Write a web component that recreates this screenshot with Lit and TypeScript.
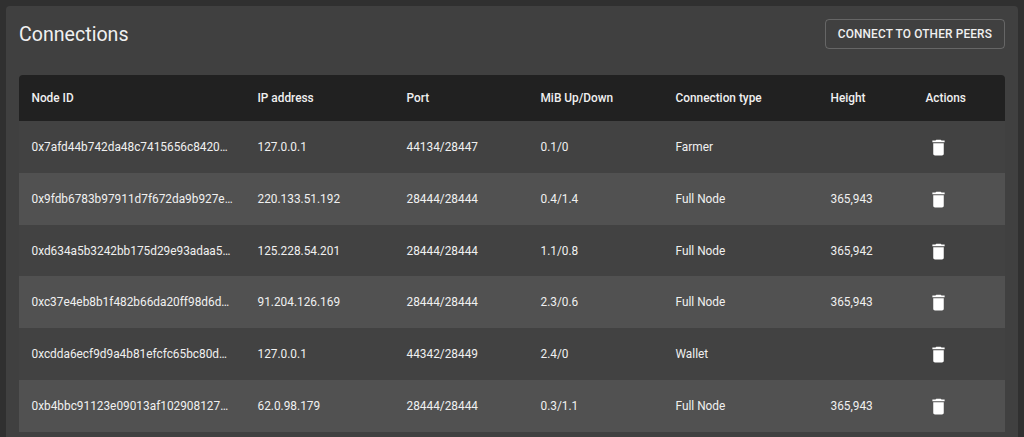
import { LitElement, html, css } from "lit";
import { customElement } from "lit/decorators.js";

const rows = [
  ["0x7afd44b742da48c7415656c8420…", "127.0.0.1", "44134/28447", "0.1/0", "Farmer", ""],
  ["0x9fdb6783b97911d7f672da9b927e…", "220.133.51.192", "28444/28444", "0.4/1.4", "Full Node", "365,943"],
  ["0xd634a5b3242bb175d29e93adaa5…", "125.228.54.201", "28444/28444", "1.1/0.8", "Full Node", "365,942"],
  ["0xc37e4eb8b1f482b66da20ff98d6d…", "91.204.126.169", "28444/28444", "2.3/0.6", "Full Node", "365,943"],
  ["0xcdda6ecf9d9a4b81efcfc65bc80d…", "127.0.0.1", "44342/28449", "2.4/0", "Wallet", ""],
  ["0xb4bbc91123e09013af102908127…", "62.0.98.179", "28444/28444", "0.3/1.1", "Full Node", "365,943"],
];

const heads = ["Node ID", "IP address", "Port", "MiB Up/Down", "Connection type", "Height", "Actions"];
const widths = [226, 149, 134, 135, 155, 95, 92];

@customElement("app-root")
export class AppRoot extends LitElement {
  static styles = css`
    :host {
      display: block;
      height: 437px;
      overflow: hidden;
      background: #303030;
      font-family: Roboto, "Liberation Sans", sans-serif;
      color: #f0f0f0;
    }
    .card {
      margin: 6px 6px 0;
      padding: 13px 13px 0;
      height: 500px;
      border-radius: 4px;
      background: #404040;
    }
    .top {
      display: flex;
      justify-content: space-between;
      align-items: center;
      height: 30px;
      margin-bottom: 26px;
    }
    h1 {
      margin: 2px 0 0;
      font-size: 19.6px;
      font-weight: 400;
      line-height: 28px;
    }
    .btn {
      font: 500 11.85px/16px Roboto, sans-serif;
      letter-spacing: 0.15px;
      color: #f0f0f0;
      background: transparent;
      border: 1px solid rgba(255, 255, 255, 0.2);
      border-radius: 4px;
      padding: 6px 12px;
      height: 30px;
      white-space: nowrap;
    }
    table {
      width: 986px;
      table-layout: fixed;
      border-collapse: separate;
      border-spacing: 0;
      font-size: 11.85px;
    }
    th {
      background: #212121;
      font-weight: 500;
      text-align: left;
      height: 46px;
      padding: 0 12.5px;
      box-sizing: border-box;
    }
    th:first-child { border-top-left-radius: 4px; }
    th:last-child { border-top-right-radius: 4px; }
    td {
      height: 51.83px;
      padding: 0 12.5px;
      box-sizing: border-box;
      white-space: nowrap;
      background: #424242;
    }
    td:first-child { padding-right: 0; }
    tr:nth-child(even) td { background: #515151; }
    td.action { padding: 1px 0 0 14.5px; }
    svg { display: block; width: 21px; height: 21px; fill: #fff; }
  `;

  render() {
    return html`<div class="card">
      <div class="top">
        <h1>Connections</h1>
        <button class="btn">CONNECT TO OTHER PEERS</button>
      </div>
      <table>
        <colgroup>${widths.map((w) => html`<col style="width:${w}px" />`)}</colgroup>
        <thead><tr>${heads.map((h) => html`<th>${h}</th>`)}</tr></thead>
        <tbody>
          ${rows.map(
            (r) => html`<tr>
              ${r.map((c) => html`<td>${c}</td>`)}
              <td class="action">
                <svg viewBox="0 0 24 24"><path d="M6 19c0 1.1.9 2 2 2h8c1.1 0 2-.9 2-2V7H6v12zM19 4h-3.5l-1-1h-5l-1 1H5v2h14V4z" /></svg>
              </td>
            </tr>`
          )}
        </tbody>
      </table>
    </div>`;
  }
}
